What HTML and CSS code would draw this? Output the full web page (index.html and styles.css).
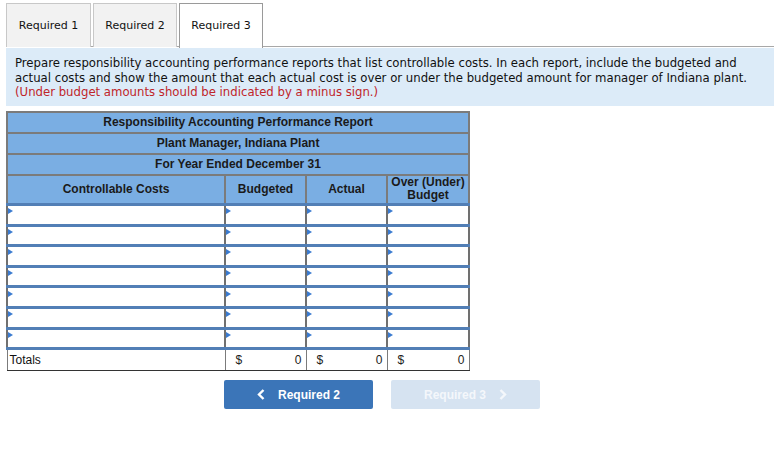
FILE: index.html
```html
<!DOCTYPE html>
<html>
<head>
<meta charset="utf-8">
<link rel="stylesheet" href="styles.css">
</head>
<body>
<div class="page">
  <div class="tabs">
    <div class="tab">Required 1</div>
    <div class="tab">Required 2</div>
    <div class="tab active">Required 3</div>
  </div>
  <div class="info">
    <p>Prepare responsibility accounting performance reports that list controllable costs. In each report, include the budgeted and<br>actual costs and show the amount that each actual cost is over or under the budgeted amount for manager of Indiana plant.<br><span class="red">(Under budget amounts should be indicated by a minus sign.)</span></p>
  </div>
  <table class="report">
    <colgroup>
      <col class="c1"><col class="c2"><col class="c3"><col class="c4">
    </colgroup>
    <tr class="hrow"><th colspan="4">Responsibility Accounting Performance Report</th></tr>
    <tr class="hrow"><th colspan="4">Plant Manager, Indiana Plant</th></tr>
    <tr class="hrow"><th colspan="4">For Year Ended December 31</th></tr>
    <tr class="colhead"><th>Controllable Costs</th><th>Budgeted</th><th>Actual</th><th>Over (Under)<br>Budget</th></tr>
    <tr class="in"><td><div class="box"></div></td><td><div class="box"></div></td><td><div class="box"></div></td><td><div class="box"></div></td></tr>
    <tr class="in"><td><div class="box"></div></td><td><div class="box"></div></td><td><div class="box"></div></td><td><div class="box"></div></td></tr>
    <tr class="in"><td><div class="box"></div></td><td><div class="box"></div></td><td><div class="box"></div></td><td><div class="box"></div></td></tr>
    <tr class="in"><td><div class="box"></div></td><td><div class="box"></div></td><td><div class="box"></div></td><td><div class="box"></div></td></tr>
    <tr class="in"><td><div class="box"></div></td><td><div class="box"></div></td><td><div class="box"></div></td><td><div class="box"></div></td></tr>
    <tr class="in"><td><div class="box"></div></td><td><div class="box"></div></td><td><div class="box"></div></td><td><div class="box"></div></td></tr>
    <tr class="in"><td><div class="box"></div></td><td><div class="box"></div></td><td><div class="box"></div></td><td><div class="box"></div></td></tr>
    <tr class="totals">
      <td>Totals</td>
      <td><div class="amt"><span>$</span><span>0</span></div></td>
      <td><div class="amt"><span>$</span><span>0</span></div></td>
      <td><div class="amt"><span>$</span><span>0</span></div></td>
    </tr>
  </table>
  <div class="nav">
    <div class="btn prev"><svg class="chev" width="8" height="11" viewBox="0 0 8 11"><path d="M6.5 1 L2 5.5 L6.5 10" fill="none" stroke="currentColor" stroke-width="2.4"/></svg><span>Required 2</span></div>
    <div class="btn next disabled"><span>Required 3</span><svg class="chev" width="8" height="11" viewBox="0 0 8 11"><path d="M1.5 1 L6 5.5 L1.5 10" fill="none" stroke="currentColor" stroke-width="2.4"/></svg></div>
  </div>
</div>
</body>
</html>
```

FILE: styles.css
```css
* { box-sizing: border-box; }
html, body { margin: 0; padding: 0; background: #fff; }
.page { padding: 3px 0 0 6px; width: 774px; }

.tabs { display: flex; gap: 2px; border-bottom: 1px solid #a8a8a8; height: 44px; }
.tab {
  width: 85px; height: 44px;
  background: #f2f2f2; border: 1px solid #c8c8c8; border-bottom: none;
  font: 11px Verdana, "DejaVu Sans", sans-serif; color: #111;
  display: flex; align-items: center; justify-content: center;
}
.tab:nth-child(2), .tab:nth-child(3) { width: 84px; }
.tab.active { background: #fff; border-color: #9a9a9a; margin-bottom: -1px; height: 45px; padding-bottom: 1px; }

.info { background: #dcebf8; padding: 8px 4px 6px 9px; margin-top: 1px; }
.info p { margin: 0; font: 13px "DejaVu Sans Condensed", "DejaVu Sans", sans-serif; line-height: 14.5px; color: #111; white-space: nowrap; }
.red { color: #c0252a; }

.report {
  margin-top: 5px; border-collapse: collapse; width: 462px; table-layout: fixed;
  font-family: "Liberation Sans", Arial, sans-serif; font-size: 12px;
}
.c1 { width: 218px; } .c2 { width: 81px; } .c3 { width: 81px; } .c4 { width: 82px; }
.report th { background: #7aaee3; border: 2px solid #7b7b7b; font-weight: bold; color: #1a1a1a; padding: 0; }
.hrow th { height: 21px; }
.colhead th { height: 30px; line-height: 13px; }
.report td { border: 2px solid #6e6e6e; padding: 0; }
.in td { height: 20.6px; border-top: 3px solid #527fb6; border-bottom: 3px solid #527fb6; border-left: 2px solid #707070; border-right: 2px solid #707070; }
.box { position: relative; height: 15px; background: #fff; }
.box::before {
  content: ""; position: absolute; left: 0; top: 1px;
  border-left: 5px solid #3b7bd0; border-top: 3px solid transparent; border-bottom: 3px solid transparent;
}
.totals td { height: 22px; border: 1px solid #7b7b7b; border-top: 2px solid #222; border-bottom: 1px solid #333; color: #111; }
.totals td:first-child { padding-left: 2px; }
.amt { display: flex; justify-content: space-between; padding: 0 4px 0 10px; color: #222; }

.nav { display: flex; gap: 18px; margin: 9px 0 0 218px; }
.btn {
  width: 149px; height: 29px; border-radius: 2px;
  display: flex; align-items: center; justify-content: center; gap: 13px;
  font: bold 12px "Liberation Sans", Arial, sans-serif; color: #fff;
}
.prev { background: #3b75b8; }
.disabled { background: #d6e3f1; color: #f4f7fb; }
.chev { display: block; }
```
